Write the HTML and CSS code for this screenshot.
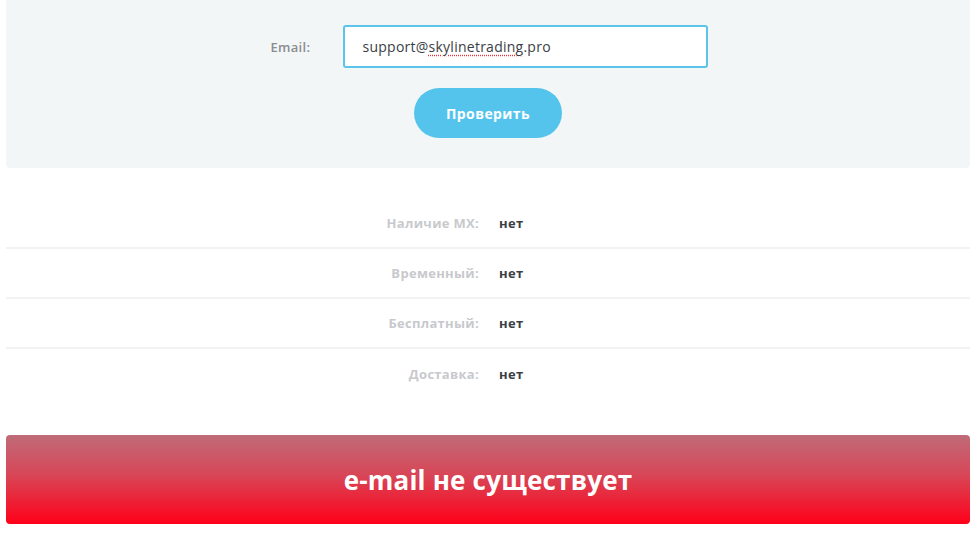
FILE: index.html
```html
<!DOCTYPE html>
<html lang="ru">
<head>
<meta charset="utf-8">
<title>Проверка email</title>
<link rel="stylesheet" href="styles.css">
</head>
<body>
<div class="page">
  <section class="panel">
    <div class="field-row">
      <label class="field-label">Email:</label>
      <div class="field-input">support@<span class="spell">skylinetrading</span>.pro</div>
    </div>
    <button class="check-btn">Проверить</button>
  </section>

  <section class="results">
    <div class="result-row"><span class="r-label">Наличие MX:</span><span class="r-value">нет</span></div>
    <div class="result-row"><span class="r-label">Временный:</span><span class="r-value">нет</span></div>
    <div class="result-row"><span class="r-label">Бесплатный:</span><span class="r-value">нет</span></div>
    <div class="result-row"><span class="r-label">Доставка:</span><span class="r-value">нет</span></div>
  </section>

  <div class="verdict">e-mail не существует</div>
</div>
</body>
</html>
```

FILE: styles.css
```css
* { box-sizing: border-box; }
html, body { margin: 0; padding: 0; background: #ffffff; }
body {
  font-family: "Open Sans", "Noto Sans", "DejaVu Sans", sans-serif;
  color: #3b3f46;
}
.page {
  padding: 0 4px 0 6px;
}
.panel {
  background: #f3f6f7;
  border-radius: 0 0 4px 4px;
  padding: 25px 0 30px;
  display: flex;
  flex-direction: column;
  align-items: center;
}
.field-row {
  display: flex;
  align-items: center;
  margin-left: 2px;
}
.field-label {
  font-size: 13px;
  font-weight: 600;
  color: #8a8d91;
  width: 41px;
  margin-right: 31px;
  letter-spacing: 0.3px;
}
.field-input {
  width: 365px;
  height: 43px;
  background: #fff;
  border: 2px solid #5cc3ea;
  border-radius: 3px;
  padding: 0 0 0 18px;
  display: flex;
  align-items: center;
  font-size: 14px;
  font-weight: 500;
  color: #3a3e45;
  letter-spacing: 0.25px;
}
.spell {
  text-decoration: underline dotted #e8333c;
  text-underline-offset: 3px;
}
.check-btn {
  margin-top: 20px;
  width: 148px;
  height: 50px;
  border: none;
  border-radius: 25px;
  background: #55c4ec;
  color: #ffffff;
  font-family: inherit;
  font-size: 14px;
  font-weight: 700;
  letter-spacing: 0.4px;
  padding: 0;
}
.results {
  margin-top: 31px;
}
.result-row {
  height: 50px;
  display: grid;
  grid-template-columns: 473px 1fr;
  column-gap: 20px;
  align-items: center;
  border-bottom: 2px solid #f1f2f3;
  font-size: 13px;
  font-weight: 700;
}
.result-row:last-child { border-bottom: none; }
.r-label {
  text-align: right;
  color: #c8c9cd;
  letter-spacing: 0.3px;
}
.r-value {
  color: #3b3e45;
  letter-spacing: 0.3px;
}
.verdict {
  margin-top: 36px;
  height: 89px;
  border-radius: 4px;
  background: linear-gradient(to bottom, #bf6b78 0%, #d84657 45%, #ff0019 100%);
  color: #ffffff;
  font-size: 26px;
  font-weight: 700;
  display: flex;
  align-items: center;
  justify-content: center;
  letter-spacing: 0.2px;
}
```
